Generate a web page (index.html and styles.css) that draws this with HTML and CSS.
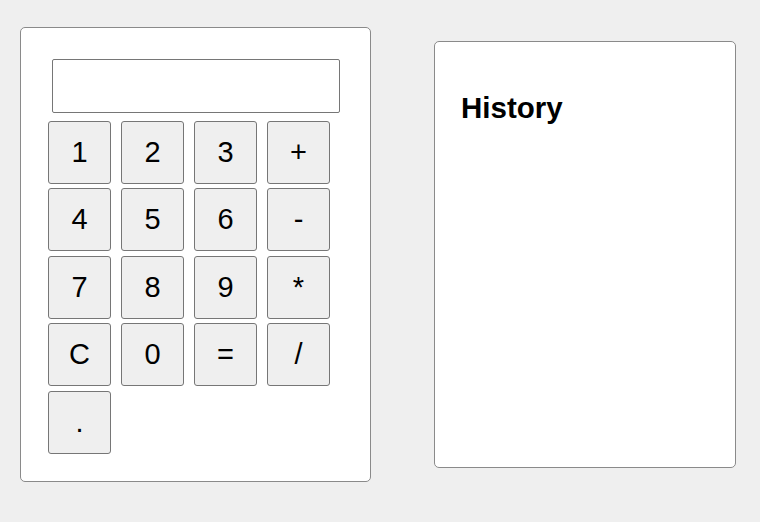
FILE: index.html
```html
<!DOCTYPE html>
<html>
<head>
<meta charset="utf-8">
<title>Calculator</title>
<link rel="stylesheet" href="styles.css">
</head>
<body>
<div class="page">
  <div class="calculator">
    <input class="display" type="text">
    <div class="keys">
      <button class="key">1</button>
      <button class="key">2</button>
      <button class="key">3</button>
      <button class="key">+</button>
      <button class="key">4</button>
      <button class="key">5</button>
      <button class="key">6</button>
      <button class="key">-</button>
      <button class="key">7</button>
      <button class="key">8</button>
      <button class="key">9</button>
      <button class="key">*</button>
      <button class="key">C</button>
      <button class="key">0</button>
      <button class="key">=</button>
      <button class="key">/</button>
      <button class="key">.</button>
    </div>
  </div>
  <div class="history">
    <h2 class="history-title">History</h2>
  </div>
</div>
</body>
</html>
```
FILE: styles.css
```css
html, body {
  margin: 0;
  padding: 0;
  background: #efefef;
  font-family: "Liberation Sans", Arial, sans-serif;
}
.page {
  height: 508px;
  display: flex;
  align-items: center;
  padding-left: 20px;
  gap: 63px;
  box-sizing: border-box;
}
.calculator {
  width: 351px;
  box-sizing: border-box;
  background: #fff;
  border: 1px solid #8a8a8a;
  border-radius: 5px;
  padding: 31px 30px 27px 27px;
  display: flex;
  flex-direction: column;
}
.display {
  display: block;
  width: 288px;
  height: 54px;
  box-sizing: border-box;
  margin: 0 0 8px 4px;
  border: 1px solid #767676;
  border-radius: 2px;
  padding: 0 6px;
  font-size: 28px;
  font-family: "Liberation Sans", Arial, sans-serif;
  background: #fff;
}
.keys {
  display: grid;
  grid-template-columns: repeat(4, 63px);
  grid-auto-rows: 63px;
  column-gap: 10px;
  row-gap: 4.5px;
}
.key {
  width: 63px;
  height: 63px;
  box-sizing: border-box;
  margin: 0;
  padding: 0;
  background: #efefef;
  border: 1px solid #767676;
  border-radius: 3px;
  font-family: "Liberation Sans", Arial, sans-serif;
  font-size: 29px;
  color: #000;
}
.history {
  width: 302px;
  height: 427px;
  box-sizing: border-box;
  background: #fff;
  border: 1px solid #8a8a8a;
  border-radius: 5px;
  padding: 0 26px;
}
.history-title {
  margin: 48px 0 0 0;
  font-size: 29.5px;
  line-height: 36px;
  font-weight: bold;
}
```
